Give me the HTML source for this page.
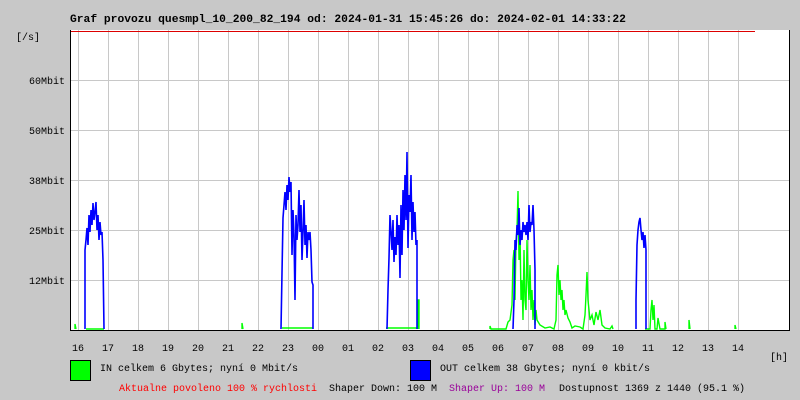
<!DOCTYPE html>
<html><head><meta charset="utf-8"><style>
html,body{margin:0;padding:0;background:#c8c8c8;width:800px;height:400px;overflow:hidden}
svg{display:block}
text{font-family:"Liberation Mono","DejaVu Sans Mono",monospace;font-size:10px;fill:#000}
</style></head><body>
<svg width="800" height="400" viewBox="0 0 800 400">
<rect x="0" y="0" width="800" height="400" fill="#c8c8c8"/>
<text x="70" y="22" style="font-size:11.3px;font-weight:bold">Graf provozu quesmpl_10_200_82_194 od: 2024-01-31 15:45:26 do: 2024-02-01 14:33:22</text>
<rect x="70" y="30" width="720" height="300" fill="#fff"/>
<g stroke="#c8c8c8" stroke-width="1">
<path d="M78.5 30V330M108.5 30V330M138.5 30V330M168.5 30V330M198.5 30V330M228.5 30V330M258.5 30V330M288.5 30V330M318.5 30V330M348.5 30V330M378.5 30V330M408.5 30V330M438.5 30V330M468.5 30V330M498.5 30V330M528.5 30V330M558.5 30V330M588.5 30V330M618.5 30V330M648.5 30V330M678.5 30V330M708.5 30V330M738.5 30V330"/>
<path d="M65 80.5H790M65 130.5H790M65 180.5H790M65 230.5H790M65 280.5H790"/>
</g>
<line x1="70" y1="31.5" x2="755" y2="31.5" stroke="#d00" stroke-width="1"/>
<g fill="none" stroke="#00ff00" stroke-width="1.4">
<polyline points="75,329 75,324 76,329"/>
<polyline points="86,329 104,329"/>
<polyline points="242,329 242,323 243,329"/>
<polyline points="282,328 313,328"/>
<polyline points="386,328 417,328"/>
<polyline points="418,329 418,300 419,300 419,329"/>
<polyline points="490,329 490,326 491,329 506,329 508,322 510,320 512,305 513,260 514,250 515,300 516,240 517,230 518,191 519,260 520,230 521,300 522,280 523,320 524,250 525,300 526,310 527,240 528,280 529,300 530,265 531,310 532,290 533,320 534,300 535,325 536,310 537,320 540,325 545,328 550,327 554,329 556,320 557,275 558,265 559,295 560,280 561,300 562,290 563,310 564,300 565,315 566,310 568,318 570,322 572,328 575,326 580,327 583,329 585,315 586,295 587,272 588,300 589,310 590,320 592,315 594,325 596,312 598,320 600,310 602,325 605,328 610,329 612,326 613,329"/>
<polyline points="645,329 650,329 651,310 652,300 653,320 654,305 655,329 657,329 658,318 660,329 665,329 665,322 666,329"/>
<polyline points="689,329 689,320 690,329"/>
<polyline points="735,329 735,325 736,329"/>
</g>
<g fill="none" stroke="#0000ff" stroke-width="1.6">
<polyline points="85,329 85,250 86,240 87,228 88,245 89,215 90,232 91,210 92,225 93,203 94,220 95,212 96,202 97,230 98,215 99,240 100,222 101,235 102,232 103,260 104,329"/>
<polyline points="281,329 282,273 283,218 284,205 285,192 286,210 287,185 288,200 289,177 290,192 291,182 292,255 293,210 294,235 295,300 296,215 297,240 298,225 299,190 300,232 301,205 302,260 303,232 304,200 305,245 306,225 307,258 308,232 309,240 310,232 311,250 312,282 313,285 313,329"/>
<polyline points="387,329 388,290 389,258 390,215 391,232 392,250 393,220 394,262 395,237 396,255 397,215 398,245 399,225 400,278 401,205 402,255 403,190 404,230 405,175 406,220 407,152 408,248 409,195 410,212 411,175 412,240 413,202 414,232 415,212 416,245 417,240 417,329"/>
<polyline points="513,329 514,300 515,240 516,250 517,225 518,235 519,208 520,245 521,230 522,240 523,222 524,232 525,225 526,235 527,222 528,240 529,205 530,232 531,222 532,225 533,205 534,230 535,270 535,329"/>
<polyline points="636,329 636,300 637,245 638,230 639,222 640,218 641,230 642,240 643,232 644,248 645,235 646,250 646,329"/>
</g>
<path d="M70.5 30V330.5H790M789.5 30V330" stroke="#000" stroke-width="1" fill="none"/>
<g text-anchor="end">
<text x="40" y="40">[/s]</text>
<text x="65" y="84">60Mbit</text>
<text x="65" y="134">50Mbit</text>
<text x="65" y="184">38Mbit</text>
<text x="65" y="234">25Mbit</text>
<text x="65" y="284">12Mbit</text>
</g>
<g text-anchor="middle">
<text x="78" y="351">16</text><text x="108" y="351">17</text><text x="138" y="351">18</text><text x="168" y="351">19</text><text x="198" y="351">20</text><text x="228" y="351">21</text><text x="258" y="351">22</text><text x="288" y="351">23</text><text x="318" y="351">00</text><text x="348" y="351">01</text><text x="378" y="351">02</text><text x="408" y="351">03</text><text x="438" y="351">04</text><text x="468" y="351">05</text><text x="498" y="351">06</text><text x="528" y="351">07</text><text x="558" y="351">08</text><text x="588" y="351">09</text><text x="618" y="351">10</text><text x="648" y="351">11</text><text x="678" y="351">12</text><text x="708" y="351">13</text><text x="738" y="351">14</text>
</g>
<text x="770" y="360">[h]</text>
<rect x="70.5" y="360.5" width="20" height="20" fill="#00ff00" stroke="#000"/>
<text x="100" y="371">IN celkem 6 Gbytes; nyní 0 Mbit/s</text>
<rect x="410.5" y="360.5" width="20" height="20" fill="#0000ff" stroke="#000"/>
<text x="440" y="371">OUT celkem 38 Gbytes; nyní 0 kbit/s</text>
<text x="119" y="391" style="fill:#ff0000">Aktualne povoleno 100 % rychlosti</text>
<text x="329" y="391">Shaper Down: 100 M</text>
<text x="449" y="391" style="fill:#990099">Shaper Up: 100 M</text>
<text x="559" y="391">Dostupnost 1369 z 1440 (95.1 %)</text>
</svg>
</body></html>
